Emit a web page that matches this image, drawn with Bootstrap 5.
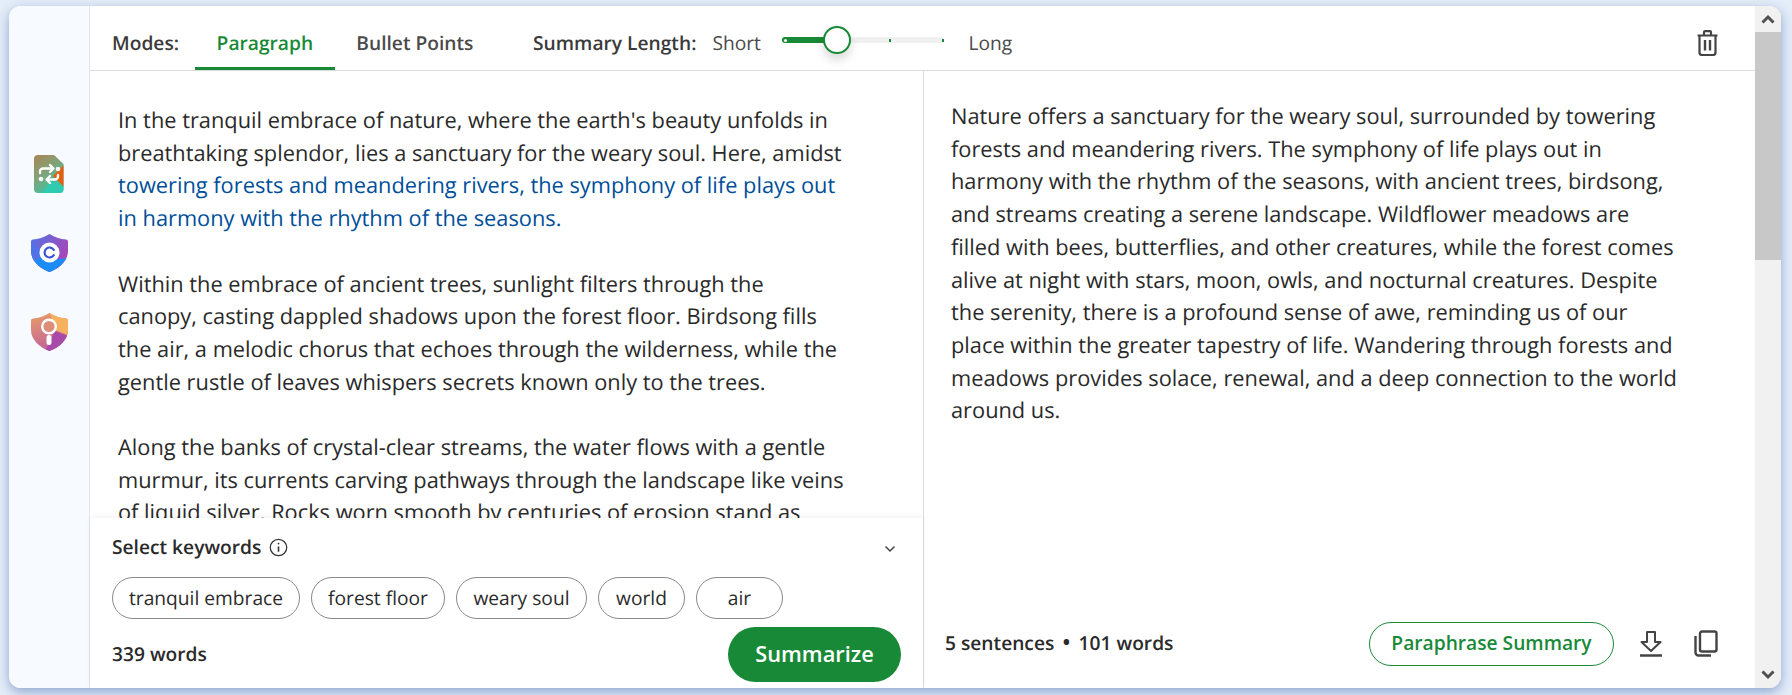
<!doctype html>
<html lang="en">
<head>
<meta charset="utf-8">
<title>Summarizer</title>
<link href="https://cdn.jsdelivr.net/npm/bootstrap@5.3.0/dist/css/bootstrap.min.css" rel="stylesheet">
<style>
html,body{height:695px;overflow:hidden}
body{background:#e4edf8;font-family:"Open Sans",sans-serif;color:#2a2a2a;padding:6px 11px 7px 9px;text-rendering:geometricPrecision}
.shell{height:682px;background:#fff;border-radius:12px;box-shadow:0 4px 12px rgba(50,90,165,.48);overflow:hidden}
.rail{width:81px;background:#f7fbff;border-right:1px solid #e2e6ea;padding-top:144px;gap:31px}
.rail-ico{height:48px}
.main-area{min-width:0}
.topbar{height:65px;border-bottom:1px solid #dcdcdc;padding:10px 36px 0 22px}
.lbl{font-size:19.2px;font-weight:600;color:#3a3a3a}
.tab-item{font-size:19.2px;font-weight:600;color:#4a4a4a;padding:6px 21.600px 0;height:56px;display:flex;align-items:center;border-bottom:3px solid transparent;align-self:flex-end}
.tab-on{color:#188a37;border-bottom-color:#188a37}
.len-lbl{margin-left:38px}
.endword{font-size:19.2px;color:#4a4a4a}
.slide{width:162px;height:6px;background:#f0f0f0;border-radius:3px;margin:-6px 24px 0 21.500px;position:relative}
.slide-fill{width:54px;height:6px;background:#188a37;border-radius:3px}
.slide-knob{position:absolute;left:41px;top:-11px;width:28px;height:28px;border-radius:50%;background:#fff;border:2px solid #188a37;box-shadow:0 6px 10px rgba(0,0,0,.14)}
.slide-tick{position:absolute;top:1.5px;width:2px;height:3px;background:#188a37}
.slide-dot{position:absolute;top:1.5px;left:2px;width:3px;height:3px;border-radius:50%;background:#fff}
.col-left{width:834px;border-right:1px solid #dcdcdc;min-height:0}
.src{flex:1 1 0;overflow:hidden;padding:34px 76px 0 28px;min-height:0}
.body-copy{font-size:21.8px;line-height:32.7px;margin:0}
.hl{color:#004f99}
.kw-panel{height:170px;background:#fff;box-shadow:0 -2px 6px rgba(0,0,0,.05);padding:0 22px 0 22px}
.kw-head{height:59px}
.kw-title{font-size:19.2px;font-weight:600}
.chev{margin-right:5px;margin-top:3px}
.chip-item{height:42px;border:1px solid #8a8a8a;border-radius:21px;background:#fff;font-size:19.2px;display:flex;align-items:center;justify-content:center;color:#2a2a2a}
.count{font-size:19.2px;font-weight:600}
.sep{margin:0 8px;font-size:22px;line-height:1}
.btn-sum{width:173px;height:55px;border-radius:28px;background:#188a37;color:#fff;font-size:21.8px;font-weight:600;display:flex;align-items:center;justify-content:center;padding:0;border:0}
.col-right{min-width:0}
.out{padding:30px 75px 0 27px;flex:1 1 0;overflow:hidden}
.foot-r{height:85px;padding:0 37px 4px 21px}
.btn-para{width:245px;height:44px;border:1px solid #188a37;border-radius:22px;color:#188a37;background:#fff;font-size:19.2px;font-weight:600;padding:0;display:flex;align-items:center;justify-content:center}
.ico-dl{margin-left:25px}
.ico-copy{margin-left:31px}
.fake-bar{width:26px;background:#f1f1f1}
.bar-thumb{height:228px;background:#c8c8c8}
.bar-cap{height:26px}
</style>
</head>
<body>
<div class="shell d-flex">
  <div class="rail d-flex flex-column align-items-center flex-shrink-0">
    <div class="rail-ico d-flex align-items-center">
      <svg width="30" height="38" viewBox="0 0 30 38">
        <defs>
          <clipPath id="docclip"><path d="M4 0H20L29.500 9V34a4 4 0 0 1-4 4H4a4 4 0 0 1-4-4V4a4 4 0 0 1 4-4Z"/></clipPath>
          <linearGradient id="doca" x1="0" y1="0" x2=".6" y2="1"><stop offset="0" stop-color="#ac8455"/><stop offset=".5" stop-color="#7fa478"/><stop offset="1" stop-color="#37c6a8"/></linearGradient>
        </defs>
        <g clip-path="url(#docclip)">
          <rect width="30" height="38" fill="url(#doca)"/>
          <path d="M30 10L19 21L30 32Z" fill="#e85c10"/>
          <path d="M18 25L30 32V38H8Z" fill="#2fcbb0"/>
        </g>
        <g fill="none" stroke="#fff" stroke-width="2.400" stroke-linecap="round" stroke-linejoin="round">
          <path d="M6 18v-1.500a3 3 0 0 1 3-3H19M16 10l3.500 3.500L16 17"/>
          <path d="M24 20v1.500a3 3 0 0 1-3 3H13M16 21l-3.500 3.500L16 28"/>
        </g>
        <circle cx="24" cy="14" r="2.300" fill="#fff"/><circle cx="7" cy="24" r="2.300" fill="#fff"/>
      </svg>
    </div>
    <div class="rail-ico d-flex align-items-center">
      <svg width="37" height="38" viewBox="0 0 37 38">
        <defs>
          <clipPath id="sh1"><path d="M18.500 0C24 3.500 30 5 35 5.500a2 2 0 0 1 2 2V17C37 27 28 34.500 18.500 38C9 34.500 0 27 0 17V7.500a2 2 0 0 1 2-2C7 5 13 3.500 18.500 0Z"/></clipPath>
          <linearGradient id="sha" x1="0" y1="0" x2="1" y2=".5"><stop offset="0" stop-color="#4f73e6"/><stop offset="1" stop-color="#a947b8"/></linearGradient>
        </defs>
        <g clip-path="url(#sh1)">
          <rect width="37" height="38" fill="url(#sha)"/>
          <path d="M0 22L20 26L37 24V38H0Z" fill="#1b8cf6"/>
          <path d="M0 8V30L14 20Z" fill="#4f73e6"/>
        </g>
        <circle cx="18.500" cy="18.500" r="10" fill="#fff"/>
        <path d="M22.800 15.800a5 5 0 1 0 0 5.400" fill="none" stroke="#3554d8" stroke-width="2.200" stroke-linecap="round"/>
      </svg>
    </div>
    <div class="rail-ico d-flex align-items-center">
      <svg width="37" height="38" viewBox="0 0 37 38">
        <defs>
          <clipPath id="sh2"><path d="M18.500 0C24 3.500 30 5 35 5.500a2 2 0 0 1 2 2V17C37 27 28 34.500 18.500 38C9 34.500 0 27 0 17V7.500a2 2 0 0 1 2-2C7 5 13 3.500 18.500 0Z"/></clipPath>
          <linearGradient id="shb" x1=".2" y1="0" x2=".5" y2="1"><stop offset="0" stop-color="#e89a68"/><stop offset="1" stop-color="#c0609c"/></linearGradient>
        </defs>
        <g clip-path="url(#sh2)">
          <rect width="37" height="38" fill="url(#shb)"/>
          <path d="M19 0H37V22L24 17Z" fill="#f5b15e"/>
          <path d="M24 18L37 23V38H14Z" fill="#a84aa8"/>
        </g>
        <circle cx="18" cy="13.500" r="6.800" fill="#dd8e78" stroke="#fff" stroke-width="2.400"/>
        <rect x="15.500" y="22" width="5" height="10" rx="2.500" fill="#fff"/>
      </svg>
    </div>
  </div>

  <div class="main-area flex-grow-1 d-flex flex-column">
    <div class="topbar d-flex align-items-center flex-shrink-0">
      <span class="lbl">Modes:</span>
      <span class="tab-item tab-on ms-3">Paragraph</span>
      <span class="tab-item">Bullet Points</span>
      <span class="lbl len-lbl">Summary Length:</span>
      <span class="endword ms-3">Short</span>
      <div class="slide flex-shrink-0">
        <div class="slide-fill"></div>
        <span class="slide-dot"></span>
        <span class="slide-tick" style="left:107px"></span>
        <span class="slide-tick" style="left:160px"></span>
        <span class="slide-knob"></span>
      </div>
      <span class="endword">Long</span>
      <svg class="ms-auto" width="23" height="26" viewBox="0 0 22 26" fill="none" stroke="#444" stroke-width="2.200">
        <path d="M1 5.500H21M7.500 5V2.200a1 1 0 0 1 1-1H13.500a1 1 0 0 1 1 1V5M3 5.500V22.500a2.500 2.500 0 0 0 2.500 2.500H16.500a2.500 2.500 0 0 0 2.500-2.500V5.500"/>
        <path d="M8.500 10V20.500M13.500 10V20.500" stroke-width="2.400"/>
      </svg>
    </div>
    <div class="d-flex flex-grow-1" style="min-height:0">
      <div class="col-left d-flex flex-column flex-shrink-0">
        <div class="src">
          <p class="body-copy mb-0">In the tranquil embrace of nature, where the earth's beauty unfolds in breathtaking splendor, lies a sanctuary for the weary soul. Here, amidst <span class="hl">towering forests and meandering rivers, the symphony of life plays out in harmony with the rhythm of the seasons.</span><br><br>Within the embrace of ancient trees, sunlight filters through the canopy, casting dappled shadows upon the forest floor. Birdsong fills the air, a melodic chorus that echoes through the wilderness, while the gentle rustle of leaves whispers secrets known only to the trees.<br><br>Along the banks of crystal-clear streams, the water flows with a gentle murmur, its currents carving pathways through the landscape like veins of liquid silver. Rocks worn smooth by centuries of erosion stand as</p>
        </div>
        <div class="kw-panel flex-shrink-0">
          <div class="kw-head d-flex align-items-center justify-content-between">
            <div class="d-flex align-items-center gap-2">
              <span class="kw-title">Select keywords</span>
              <svg width="19" height="19" viewBox="0 0 18 18" fill="none" stroke="#333" stroke-width="1.200"><circle cx="9" cy="9" r="7.800"/><path d="M9 8v5" stroke-width="1.500"/><circle cx="9" cy="5.300" r=".9" fill="#333" stroke="none"/></svg>
            </div>
            <svg class="chev" width="12" height="8" viewBox="0 0 12 8" fill="none" stroke="#444" stroke-width="1.500"><path d="M1.500 1.500L6 6l4.500-4.500"/></svg>
          </div>
          <div class="d-flex" style="gap:11px">
            <span class="chip-item" style="width:188px">tranquil embrace</span>
            <span class="chip-item" style="width:134px">forest floor</span>
            <span class="chip-item" style="width:131px">weary soul</span>
            <span class="chip-item" style="width:87px">world</span>
            <span class="chip-item" style="width:87px">air</span>
          </div>
          <div class="d-flex align-items-center justify-content-between mt-2">
            <span class="count">339 words</span>
            <button class="btn btn-sum" type="button">Summarize</button>
          </div>
        </div>
      </div>
      <div class="col-right flex-grow-1 d-flex flex-column">
        <div class="out">
          <p class="body-copy">Nature offers a sanctuary for the weary soul, surrounded by towering forests and meandering rivers. The symphony of life plays out in harmony with the rhythm of the seasons, with ancient trees, birdsong, and streams creating a serene landscape. Wildflower meadows are filled with bees, butterflies, and other creatures, while the forest comes alive at night with stars, moon, owls, and nocturnal creatures. Despite the serenity, there is a profound sense of awe, reminding us of our place within the greater tapestry of life. Wandering through forests and meadows provides solace, renewal, and a deep connection to the world around us.</p>
        </div>
        <div class="foot-r d-flex align-items-center flex-shrink-0">
          <span class="count">5 sentences<span class="sep">&#8226;</span>101 words</span>
          <button class="btn btn-para ms-auto" type="button">Paraphrase Summary</button>
          <svg class="ico-dl" width="24" height="27" viewBox="0 0 24 27" fill="none" stroke="#444" stroke-width="2" stroke-linejoin="round"><path d="M8 2h8v10h5.500L12 21 2.500 12H8Z"/><path d="M1 25.500H23" stroke-width="2.500"/></svg>
          <svg class="ico-copy" width="24" height="27" viewBox="0 0 24 27" fill="none" stroke="#444" stroke-width="2.400"><rect x="6" y="1.500" width="16.500" height="20" rx="2"/><path d="M1.500 6V22.500a3 3 0 0 0 3 3H17"/></svg>
        </div>
      </div>
    </div>
  </div>

  <div class="fake-bar d-flex flex-column flex-shrink-0">
    <div class="bar-cap d-flex align-items-center justify-content-center"><svg width="14" height="10" viewBox="0 0 14 10" fill="none" stroke="#505050" stroke-width="3"><path d="M1.500 8.500L7 3l5.500 5.500"/></svg></div>
    <div class="bar-thumb"></div>
    <div class="flex-grow-1"></div>
    <div class="bar-cap d-flex align-items-center justify-content-center"><svg width="14" height="10" viewBox="0 0 14 10" fill="none" stroke="#505050" stroke-width="3"><path d="M1.500 1.500L7 7l5.500-5.500"/></svg></div>
  </div>
</div>
<script src="https://cdn.jsdelivr.net/npm/bootstrap@5.3.0/dist/js/bootstrap.bundle.min.js"></script>
</body>
</html>
